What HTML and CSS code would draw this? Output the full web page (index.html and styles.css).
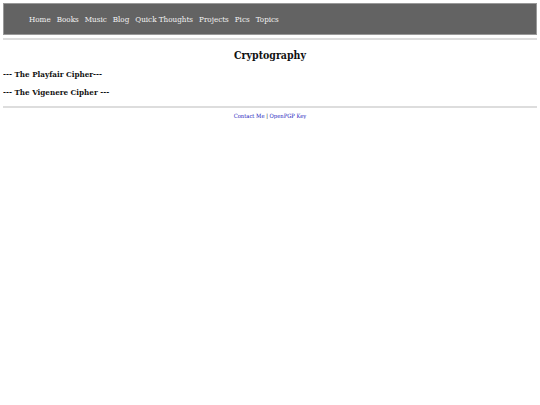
FILE: index.html
```html
<!DOCTYPE html>
<html>
<head>
<meta charset="utf-8">
<link rel="stylesheet" href="styles.css">
</head>
<body>
<div class="nav">
  <a href="#">Home</a>
  <a href="#">Books</a>
  <a href="#">Music</a>
  <a href="#">Blog</a>
  <a href="#">Quick Thoughts</a>
  <a href="#">Projects</a>
  <a href="#">Pics</a>
  <a href="#">Topics</a>
</div>
<div class="rule"></div>
<h1 class="title">Cryptography</h1>
<h3 class="section">--- The Playfair Cipher---</h3>
<h3 class="section">--- The Vigenere Cipher ---</h3>
<div class="rule footrule"></div>
<div class="footer"><a href="#">Contact Me</a> | <a href="#">OpenPGP Key</a></div>
</body>
</html>
```

FILE: styles.css
```css
body {
  margin: 3px;
  font-family: "DejaVu Serif Condensed", "DejaVu Serif", serif;
  font-stretch: condensed;
  color: #111;
  background: #fff;
}
.nav {
  background: #636363;
  border: 1px solid #999;
  height: 30px;
  display: flex;
  align-items: center;
  padding-left: 25px;
  gap: 6px;
}
.nav a {
  color: #f2f2f2;
  text-decoration: none;
  font-size: 8px;
}
.rule {
  height: 2px;
  background: #ddd;
  margin-top: 3px;
}
.title {
  text-align: center;
  font-size: 10.5px;
  margin: 9px 0 0;
}
.section {
  font-size: 8px;
  margin: 8px 0 0;
}
.footrule {
  margin-top: 9px;
}
.footer {
  text-align: center;
  font-size: 5.8px;
  margin-top: 5px;
}
.footer a {
  color: #2a1fc0;
  text-decoration: underline;
}
```
